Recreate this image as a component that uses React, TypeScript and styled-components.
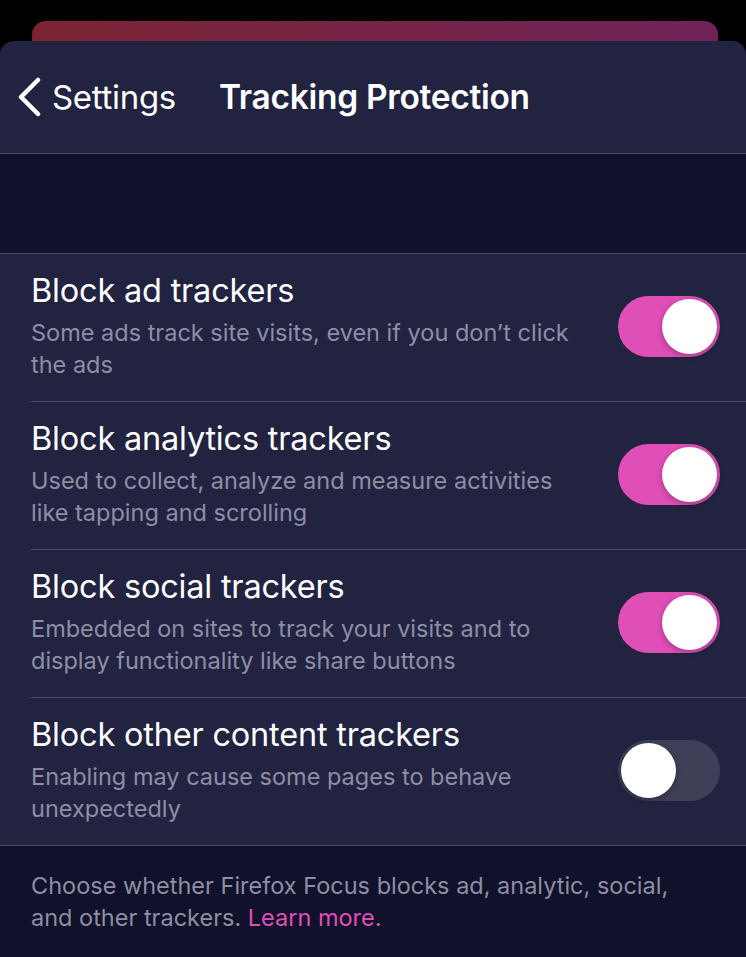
import { useState } from "react";
import styled, { createGlobalStyle } from "styled-components";

const GlobalStyle = createGlobalStyle`
  body {
    margin: 0;
    background: #000;
    font-family: Inter, "Noto Sans", sans-serif;
    -webkit-font-smoothing: antialiased;
  }
`;

const Screen = styled.div`
  width: 746px;
  height: 957px;
  background: #000;
  padding-top: 21px;
  box-sizing: border-box;
  overflow: hidden;
  display: flex;
  flex-direction: column;
`;

const BehindCard = styled.div`
  margin: 0 28px 0 32px;
  height: 34px;
  border-radius: 14px 14px 0 0;
  background: linear-gradient(90deg, #7c2434, #702359);
  margin-bottom: -14px;
`;

const Sheet = styled.div`
  flex: 1;
  border-radius: 14px 14px 0 0;
  background: #10112a;
  overflow: hidden;
  position: relative;
`;

const NavBar = styled.div`
  height: 112px;
  background: #222341;
  border-bottom: 1px solid #4a4b63;
  display: flex;
  align-items: center;
  padding-left: 16px;
  color: #fff;
`;

const BackButton = styled.button`
  display: flex;
  align-items: center;
  gap: 10px;
  background: none;
  border: none;
  padding: 0;
  color: #fff;
  font-family: inherit;
  font-size: 33px;
  font-weight: 400;
  letter-spacing: -0.3px;
  cursor: pointer;
`;

const Title = styled.h1`
  margin: 0 0 0 43px;
  font-size: 33.5px;
  font-weight: 600;
  letter-spacing: -0.3px;
`;

const Spacer = styled.div`
  height: 99px;
  border-bottom: 1px solid #4a4b63;
`;

const List = styled.div`
  background: #222341;
  border-bottom: 1px solid #4a4b63;
`;

const Row = styled.div<{ $last?: boolean }>`
  display: flex;
  align-items: center;
  margin-left: 31px;
  padding: 17px 26px 20px 0;
  border-bottom: ${(p) => (p.$last ? "none" : "1px solid #4a4b63")};
`;

const RowText = styled.div`
  flex: 1;
  padding-right: 24px;
`;

const RowTitle = styled.div`
  color: #fff;
  font-size: 32.5px;
  line-height: 40px;
  letter-spacing: -0.2px;
`;

const RowSub = styled.div`
  margin-top: 6px;
  color: #8e8ea4;
  font-size: 23.5px;
  line-height: 32px;
  min-height: 64px;
`;

const Track = styled.button<{ $on: boolean }>`
  position: relative;
  flex: none;
  width: 102px;
  height: 61px;
  border-radius: 31px;
  border: none;
  padding: 0;
  cursor: pointer;
  background: ${(p) => (p.$on ? "#e04fb7" : "#3f4058")};
`;

const Knob = styled.span<{ $on: boolean }>`
  position: absolute;
  top: 3px;
  left: ${(p) => (p.$on ? "44px" : "3px")};
  width: 55px;
  height: 55px;
  border-radius: 50%;
  background: #fff;
  box-shadow: 0 2px 6px rgba(0, 0, 0, 0.3);
`;

const Footer = styled.p`
  margin: 0;
  padding: 24px 31px;
  max-width: 665px;
  color: #8e8ea4;
  font-size: 23.5px;
  line-height: 32px;
`;

const LearnMore = styled.a`
  color: #e04fb7;
  text-decoration: none;
`;

const trackers = [
  {
    title: "Block ad trackers",
    sub: "Some ads track site visits, even if you don’t click the ads",
    on: true,
  },
  {
    title: "Block analytics trackers",
    sub: "Used to collect, analyze and measure activities like tapping and scrolling",
    on: true,
  },
  {
    title: "Block social trackers",
    sub: "Embedded on sites to track your visits and to display functionality like share buttons",
    on: true,
  },
  {
    title: "Block other content trackers",
    sub: "Enabling may cause some pages to behave unexpectedly",
    on: false,
  },
];

const Chevron = () => (
  <svg width="26" height="40" viewBox="0 0 26 40">
    <path
      d="M22 3 L5 20 L22 37"
      fill="none"
      stroke="#fff"
      strokeWidth="4.5"
      strokeLinecap="round"
      strokeLinejoin="round"
    />
  </svg>
);

const App = () => {
  const [states, setStates] = useState(trackers.map((t) => t.on));

  const flip = (i: number) =>
    setStates((s) => s.map((v, j) => (j === i ? !v : v)));

  return (
    <>
      <GlobalStyle />
      <Screen>
        <BehindCard />
        <Sheet>
          <NavBar>
            <BackButton>
              <Chevron />
              Settings
            </BackButton>
            <Title>Tracking Protection</Title>
          </NavBar>
          <Spacer />
          <List>
            {trackers.map((t, i) => (
              <Row key={t.title} $last={i === trackers.length - 1}>
                <RowText>
                  <RowTitle>{t.title}</RowTitle>
                  <RowSub>{t.sub}</RowSub>
                </RowText>
                <Track $on={states[i]} onClick={() => flip(i)}>
                  <Knob $on={states[i]} />
                </Track>
              </Row>
            ))}
          </List>
          <Footer>
            Choose whether Firefox Focus blocks ad, analytic, social, and other
            trackers. <LearnMore href="#">Learn more.</LearnMore>
          </Footer>
        </Sheet>
      </Screen>
    </>
  );
};

export default App;
